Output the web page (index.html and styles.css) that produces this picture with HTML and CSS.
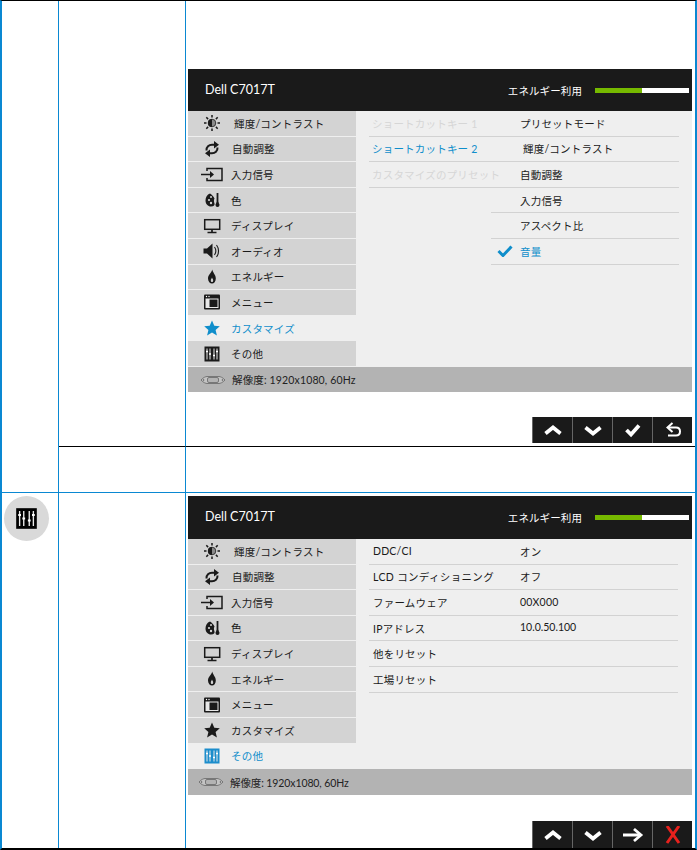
FILE: index.html
```html
<!DOCTYPE html>
<html lang="ja">
<head>
<meta charset="utf-8">
<title>Dell C7017T</title>
<link rel="stylesheet" href="styles.css">
</head>
<body>
<svg class="defs" aria-hidden="true">
  <symbol id="i-sun" viewBox="0 0 24 24"><circle cx="12" cy="12" r="3.800" fill="#8a8a8a" stroke="currentColor" stroke-width=".8"/><path d="M12 8a4 4 0 0 0 0 8z" fill="currentColor"/><path d="M12 4v2.500M12 17.500V20M4 12h2.500M17.500 12H20M6.300 6.300l1.800 1.800M15.900 15.900l1.800 1.800M6.300 17.700l1.800-1.800M15.900 8.100l1.800-1.800" stroke="currentColor" stroke-width="1.500" fill="none"/></symbol>
  <symbol id="i-sync" viewBox="0 0 24 24"><path d="M6.500 13.500C6.200 9.800 9 7.700 12 7.700h3M17.500 10.500c.3 3.700-2.500 5.800-5.500 5.800H9" stroke="currentColor" stroke-width="2" fill="none"/><path d="M14 4l5 3.700-5 3.700zM10 12.600l-5 3.700 5 3.700z" fill="currentColor"/></symbol>
  <symbol id="i-input" viewBox="0 0 24 24"><path d="M7 9V6.500h15v12H7V16" stroke="currentColor" stroke-width="1.500" fill="none"/><path d="M1 12.500h10" stroke="currentColor" stroke-width="1.500"/><path d="M10 9l4 3.500-4 3.500z" fill="currentColor"/></symbol>
  <symbol id="i-color" viewBox="0 0 24 24"><path d="M10 5.500c-3 1-4.500 4-4.500 7 0 3.500 2.500 6 5.500 6s4-1.500 3.500-3c-.500-2-1-3 0-5-1-2-2.500-4-4.500-5z" fill="currentColor"/><circle cx="9" cy="12" r="1.100" fill="#d3d3d3"/><circle cx="11" cy="9" r="1" fill="#d3d3d3"/><circle cx="11" cy="15" r="1.200" fill="#d3d3d3"/><path d="M17.500 5v10" stroke="currentColor" stroke-width="1.800"/><path d="M17.500 13c-1.300 2-2 3-2 4a2 2 0 0 0 4 0c0-1-.700-2-2-4z" fill="currentColor"/></symbol>
  <symbol id="i-monitor" viewBox="0 0 24 24"><rect x="4.700" y="5.700" width="15" height="9.600" fill="none" stroke="currentColor" stroke-width="1.500"/><path d="M12 15v3M7.500 18.500h9" stroke="currentColor" stroke-width="1.700"/></symbol>
  <symbol id="i-speaker" viewBox="0 0 24 24"><path d="M3.500 9.500h3.500l5.500-5v15L7 14.500H3.500z" fill="currentColor"/><path d="M14.500 8c1.700 2.500 1.700 5.500 0 8M16.500 6c2.700 3.500 2.700 8.500 0 12" stroke="currentColor" stroke-width="1.100" fill="none"/></symbol>
  <symbol id="i-flame" viewBox="0 0 24 24"><path d="M12.300 4.500c.2 3 3.500 5 3.500 9 0 3-1.800 5-3.800 5s-4-2-4-5c0-3.500 3.300-5.500 4.300-9z" fill="currentColor"/><path d="M12 12.500c.3 1 1.200 1.700 1.200 3 0 1-.6 1.600-1.200 1.600s-1.200-.6-1.200-1.600c0-1.300.9-2 1.200-3z" fill="#d3d3d3"/></symbol>
  <symbol id="i-window" viewBox="0 0 24 24"><rect x="4" y="4.500" width="16" height="15" rx="1" fill="currentColor"/><rect x="5.500" y="8.500" width="13" height="9.500" fill="#e8e8e8"/><rect x="9.500" y="9.500" width="8" height="7.500" fill="currentColor"/><circle cx="6.500" cy="6.500" r=".7" fill="#fff"/><circle cx="9" cy="6.500" r=".7" fill="#fff"/></symbol>
  <symbol id="i-star" viewBox="0 0 24 24"><path d="M12 4.500l2.300 5.200 5.500.5-4.200 3.700 1.300 5.600-4.900-3-4.900 3 1.300-5.600-4.200-3.700 5.500-.5z" fill="currentColor"/></symbol>
  <symbol id="i-sliders" viewBox="0 0 24 24"><rect x="4.500" y="4.500" width="15" height="15" fill="currentColor"/><path d="M7 6.500v11M10 6.500v11M14 6.500v11M17 6.500v11" stroke="#e8e8e8" stroke-width="1"/><path d="M6 9.500h2M9 12h2M13 13.500h2M16 9.500h2" stroke="#fff" stroke-width="1.500"/></symbol>
  <symbol id="i-vga" viewBox="0 0 26 12"><path d="M1 6c2-2.500 5-3.500 6-3.500h12c1 0 4 1 6 3.500-2 2.500-5 3.500-6 3.500H7c-1 0-4-1-6-3.500z" fill="#c4c4c4" stroke="#666" stroke-width=".8"/><rect x="7.500" y="3.500" width="11" height="5" rx="1.500" fill="#b3b3b3" stroke="#666" stroke-width=".8"/><circle cx="3.500" cy="6" r=".8" fill="#555"/><circle cx="22.500" cy="6" r=".8" fill="#555"/></symbol>
  <symbol id="b-up" viewBox="0 0 24 18"><path d="M4.500 12.500L12 6.500l7.500 6" fill="none" stroke="#fff" stroke-width="3.800"/></symbol>
  <symbol id="b-down" viewBox="0 0 24 18"><path d="M4.500 6.500l7.500 6 7.500-6" fill="none" stroke="#fff" stroke-width="3.800"/></symbol>
  <symbol id="b-check" viewBox="0 0 24 18"><path d="M5.500 9l4.500 4.500 8-9" fill="none" stroke="#fff" stroke-width="3.800"/></symbol>
  <symbol id="b-back" viewBox="0 0 24 18"><path d="M8 6.500h7c3 0 4 2 4 4s-1 4-4 4H7" fill="none" stroke="#fff" stroke-width="2"/><path d="M11.500 2L6.500 6.500l5 4.500" fill="none" stroke="#fff" stroke-width="2"/></symbol>
  <symbol id="b-right" viewBox="0 0 24 18"><path d="M2 9h18" stroke="#fff" stroke-width="3"/><path d="M13 3l7 6-7 6" fill="none" stroke="#fff" stroke-width="2.800"/></symbol>
  <symbol id="b-close" viewBox="0 0 24 18"><path d="M6 0l12 17M18 0L6 17" stroke="#e8211d" stroke-width="3" fill="none"/></symbol>
  <symbol id="i-tick" viewBox="0 0 16 12"><path d="M1.500 6l4.500 4.500 8.500-9" fill="none" stroke="currentColor" stroke-width="3"/></symbol>
</svg>

<main class="sheet">
  <div class="cell cell--icon cell--span"></div>
  <div class="cell cell--label"></div>
  <div class="cell cell--body">
    <section class="osd osd--first">
      <header class="osd-head">
        <span class="osd-model">Dell C7017T</span>
        <span class="osd-energy">エネルギー利用</span>
        <span class="energy-bar"><span class="energy-fill"></span></span>
      </header>
      <div class="osd-main">
        <ul class="menu">
          <li class="menu-row menu-row--w3"><svg class="ico"><use href="#i-sun"/></svg>輝度/コントラスト</li>
          <li class="menu-row menu-row--w1"><svg class="ico"><use href="#i-sync"/></svg>自動調整</li>
          <li class="menu-row"><svg class="ico"><use href="#i-input"/></svg>入力信号</li>
          <li class="menu-row"><svg class="ico"><use href="#i-color"/></svg>色</li>
          <li class="menu-row"><svg class="ico"><use href="#i-monitor"/></svg>ディスプレイ</li>
          <li class="menu-row"><svg class="ico"><use href="#i-speaker"/></svg>オーディオ</li>
          <li class="menu-row"><svg class="ico"><use href="#i-flame"/></svg>エネルギー</li>
          <li class="menu-row"><svg class="ico"><use href="#i-window"/></svg>メニュー</li>
          <li class="menu-row menu-row--active"><svg class="ico"><use href="#i-star"/></svg>カスタマイズ</li>
          <li class="menu-row"><svg class="ico"><use href="#i-sliders"/></svg>その他</li>
        </ul>
        <div class="lists">
          <ul class="list list--keys">
            <li class="item item--off">ショートカットキー 1</li>
            <li class="item item--on">ショートカットキー 2</li>
            <li class="item item--off">カスタマイズのプリセット</li>
          </ul>
          <ul class="list list--vals">
            <li class="item item--val">プリセットモード</li>
            <li class="item item--val item--shift">輝度/コントラスト</li>
            <li class="item item--val">自動調整</li>
            <li class="item item--val">入力信号</li>
            <li class="item item--val">アスペクト比</li>
            <li class="item item--checked item--on"><svg class="tick"><use href="#i-tick"/></svg>音量</li>
          </ul>
        </div>
      </div>
      <footer class="osd-status"><svg class="vga"><use href="#i-vga"/></svg>解像度: 1920x1080, 60Hz</footer>
    </section>
    <div class="keys">
      <span class="key"><svg class="key-ico"><use href="#b-up"/></svg></span>
      <span class="key"><svg class="key-ico"><use href="#b-down"/></svg></span>
      <span class="key"><svg class="key-ico"><use href="#b-check"/></svg></span>
      <span class="key"><svg class="key-ico"><use href="#b-back"/></svg></span>
    </div>
  </div>

  <div class="cell cell--label cell--short"></div>
  <div class="cell cell--body cell--short"></div>

  <div class="cell cell--icon cell--last">
    <span class="badge"><svg class="badge-ico"><use href="#i-sliders"/></svg></span>
  </div>
  <div class="cell cell--label cell--last"></div>
  <div class="cell cell--body cell--last">
    <section class="osd osd--second">
      <header class="osd-head">
        <span class="osd-model">Dell C7017T</span>
        <span class="osd-energy">エネルギー利用</span>
        <span class="energy-bar"><span class="energy-fill"></span></span>
      </header>
      <div class="osd-main">
        <ul class="menu">
          <li class="menu-row menu-row--w3"><svg class="ico"><use href="#i-sun"/></svg>輝度/コントラスト</li>
          <li class="menu-row menu-row--w1"><svg class="ico"><use href="#i-sync"/></svg>自動調整</li>
          <li class="menu-row"><svg class="ico"><use href="#i-input"/></svg>入力信号</li>
          <li class="menu-row"><svg class="ico"><use href="#i-color"/></svg>色</li>
          <li class="menu-row"><svg class="ico"><use href="#i-monitor"/></svg>ディスプレイ</li>
          <li class="menu-row"><svg class="ico"><use href="#i-flame"/></svg>エネルギー</li>
          <li class="menu-row"><svg class="ico"><use href="#i-window"/></svg>メニュー</li>
          <li class="menu-row"><svg class="ico"><use href="#i-star"/></svg>カスタマイズ</li>
          <li class="menu-row menu-row--active"><svg class="ico ico--tile"><use href="#i-sliders"/></svg>その他</li>
        </ul>
        <div class="lists lists--table">
          <dl class="table">
            <dt class="t-key">DDC/CI</dt><dd class="t-val">オン</dd>
            <dt class="t-key t-key--wide">LCD コンディショニング</dt><dd class="t-val">オフ</dd>
            <dt class="t-key">ファームウェア</dt><dd class="t-val">00X000</dd>
            <dt class="t-key">IPアドレス</dt><dd class="t-val t-val--raised">10.0.50.100</dd>
            <dt class="t-key">他をリセット</dt><dd class="t-val"></dd>
            <dt class="t-key">工場リセット</dt><dd class="t-val"></dd>
          </dl>
        </div>
      </div>
      <footer class="osd-status osd-status--tight"><svg class="vga"><use href="#i-vga"/></svg>解像度: 1920x1080, 60Hz</footer>
    </section>
    <div class="keys">
      <span class="key"><svg class="key-ico"><use href="#b-up"/></svg></span>
      <span class="key"><svg class="key-ico"><use href="#b-down"/></svg></span>
      <span class="key"><svg class="key-ico"><use href="#b-right"/></svg></span>
      <span class="key"><svg class="key-ico"><use href="#b-close"/></svg></span>
    </div>
  </div>
</main>
</body>
</html>
```
FILE: styles.css
```css
* { box-sizing: border-box; }
html, body { margin: 0; padding: 0; background: #fff; }
body {
  width: 697px;
  height: 850px;
  overflow: hidden;
  font-family: "Lato", "Noto Sans CJK JP", sans-serif;
}
ul, dl, dd { margin: 0; padding: 0; list-style: none; }
.defs { display: none; }

.sheet {
  display: grid;
  grid-template-columns: 57px 127px 1fr;
  grid-template-rows: 446px 46px 1fr;
  height: 850px;
  border-top: 1px solid #000;
  border-bottom: 2px solid #000;
  border-left: 2px solid #0a88d2;
  border-right: 2px solid #0a88d2;
}
.cell { min-width: 0; }
.cell--icon { border-right: 1px solid #0a88d2; }
.cell--span { grid-row: span 2; border-bottom: 1px solid #0a88d2; }
.cell--label { border-right: 1px solid #0a88d2; border-bottom: 1px solid #000; }
.cell--body { border-bottom: 1px solid #000; padding: 68px 3px 0 2px; }
.cell--short { border-bottom-color: #0a88d2; padding: 0; }
.cell--last { border-bottom: 0; }
.cell--body.cell--last { padding-top: 3px; }

.badge {
  display: flex;
  align-items: center;
  justify-content: center;
  width: 45px;
  height: 45px;
  margin: 3px 0 0 2px;
  border-radius: 50%;
  background: #d9d9d9;
  color: #000;
}
.badge-ico { width: 33px; height: 33px; }

.osd { display: flex; flex-direction: column; width: 504px; background: #efefef; }
.osd-head {
  display: flex;
  align-items: center;
  height: 42px;
  padding-left: 17px;
  background: #1a1a1a;
  color: #fff;
}
.osd--second .osd-head { height: 43px; }
.osd-model { font-size: 12.500px; line-height: 1; flex: 1; }
.osd-energy { font-size: 10.500px; letter-spacing: .1px; margin-right: 13px; }
.energy-bar {
  display: block;
  width: 94px;
  height: 5px;
  margin-right: 3px;
  background: #fff;
}
.energy-fill { display: block; width: 47px; height: 100%; background: #76b900; }

.osd-main { display: flex; }
.osd--first .osd-main { height: 256px; }
.osd--second .osd-main { height: 230px; }

.menu { display: flex; flex-direction: column; width: 168px; height: 100%; flex: none; }
.menu-row {
  display: flex;
  align-items: center;
  flex: 1;
  min-height: 0;
  padding-left: 12px;
  background: #d3d3d3;
  border-bottom: 1px solid #efefef;
  color: #1a1a1a;
  font-size: 10.500px;
  letter-spacing: .2px;
  white-space: nowrap;
}
.menu-row--active { background: #efefef; color: #0f8ecb; }
.menu-row--w3 .ico { margin-right: 10px; }
.menu-row--w1 .ico { margin-right: 8px; }
.ico { width: 24px; height: 24px; margin-right: 7px; flex: none; }
.ico--tile { color: #1c8dcc; }

.lists { display: flex; flex: 1; padding-left: 13px; }
.list { flex: none; }
.list--keys { width: 122px; }
.list--vals { width: 188px; }
.item {
  display: flex;
  align-items: center;
  height: 25.600px;
  border-bottom: 1px solid #d2d2d2;
  font-size: 10.500px;
  letter-spacing: .2px;
  white-space: nowrap;
}
.list--keys .item { padding-left: 3px; }
.item--off { color: #d6d6d6; }
.item--on { color: #0f8ecb; }
.item--val { padding-left: 29px; color: #1a1a1a; }
.item--shift { padding-left: 32px; }
.tick { width: 16px; height: 12px; margin: 0 7px 0 6px; }

.table {
  display: grid;
  grid-template-columns: 151px 158px;
  grid-auto-rows: 25.600px;
  width: 309px;
  align-self: flex-start;
}
.t-key, .t-val {
  display: flex;
  align-items: center;
  border-bottom: 1px solid #d2d2d2;
  font-size: 10.500px;
  letter-spacing: .2px;
  color: #1a1a1a;
  white-space: nowrap;
}
.t-key { padding-left: 4px; }
.t-key--wide { letter-spacing: .35px; }
.t-val--raised { padding-bottom: 2px; letter-spacing: 0; }

.osd-status {
  display: flex;
  align-items: center;
  height: 25px;
  padding-left: 12px;
  background: #b3b3b3;
  color: #222;
  font-size: 10.500px;
  letter-spacing: .15px;
  white-space: nowrap;
}
.osd-status--tight { height: 26px; padding-left: 10px; letter-spacing: -.1px; }
.vga { width: 26px; height: 12px; margin-right: 6px; flex: none; }

.keys {
  display: flex;
  width: 160px;
  height: 26px;
  margin: 25px 0 0 344px;
  background: #1a1a1a;
}
.cell--last .keys { height: 27px; margin-top: 26px; }
.key {
  display: flex;
  align-items: center;
  justify-content: center;
  width: 40px;
  border-left: 1px solid #666;
}
.key-ico { width: 24px; height: 18px; }
```
